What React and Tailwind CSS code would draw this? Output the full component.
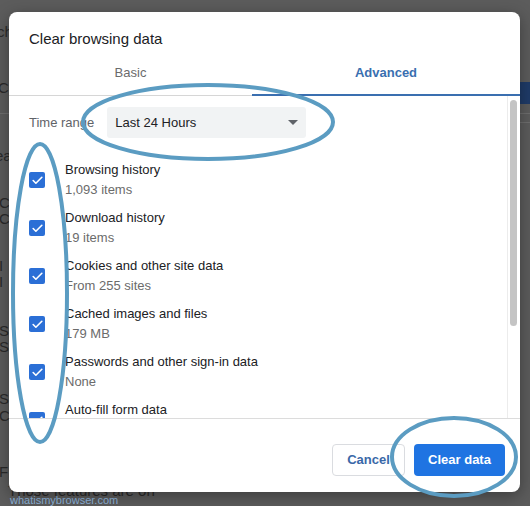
import React from "react";
import { Check } from "lucide-react";

const items = [
  { title: "Browsing history", sub: "1,093 items" },
  { title: "Download history", sub: "19 items" },
  { title: "Cookies and other site data", sub: "From 255 sites" },
  { title: "Cached images and files", sub: "179 MB" },
  { title: "Passwords and other sign-in data", sub: "None" },
  { title: "Auto-fill form data", sub: "" },
];

function Checkbox() {
  return (
    <div className="grid h-[16px] w-[16px] shrink-0 place-items-center rounded-[2px] bg-[#2b6fd6]">
      <Check className="h-[13px] w-[13px] text-white" strokeWidth={3} aria-hidden />
    </div>
  );
}

function PageBehind() {
  // the settings page that peeks out at the edges of the modal
  return (
    <div className="absolute inset-0 text-[15px] leading-[16px] text-[#2a2a2a]">
      <div className="flex flex-col">
        <span className="mt-[24px] -ml-[3px]">ch</span>
        <span className="mt-[40px] -ml-[2px]">C</span>
        <div className="mt-[17px] h-px w-full bg-[#6e6e6e]" />
        <span className="mt-[34px] -ml-[5px]">ea</span>
        <span className="mt-[31px] -ml-[1px]">C</span>
        <span className="-ml-[1px]">C</span>
        <span className="mt-[31px] -ml-[1px]">I</span>
        <span className="-ml-[1px]">I</span>
        <span className="mt-[33px] -ml-[1px]">S</span>
        <span className="-ml-[1px]">S</span>
        <span className="mt-[36px] -ml-[1px]">S</span>
        <span className="mt-[1px] -ml-[1px]">C</span>
        <span className="mt-[40px] -ml-[1px]">F</span>
      </div>
      <span className="absolute left-[8px] top-[483px] whitespace-nowrap">Those features are on</span>
      <div className="absolute right-0 top-[82px] h-[22px] w-[12px] bg-[#1f3b68]" />
      <div className="absolute right-0 top-[122px] h-px w-[12px] bg-[#6e6e6e]" />
      <span className="absolute left-[10px] top-[494px] text-[11px] leading-[12px] text-[#8fb6dc]">whatismybrowser.com</span>
    </div>
  );
}

function Annotations() {
  return (
    <svg className="pointer-events-none absolute inset-0" width="530" height="506" viewBox="0 0 530 506" fill="none">
      <g stroke="#5b9cc2" strokeWidth="4">
        <ellipse cx="208" cy="122" rx="125" ry="37" />
        <ellipse cx="40" cy="293" rx="27" ry="149" />
        <ellipse cx="454" cy="457" rx="62" ry="39" />
      </g>
    </svg>
  );
}

export default function App() {
  return (
    <div className="relative h-[506px] w-[530px] overflow-hidden bg-[#5c5c5c] font-['Liberation_Sans',Arial,sans-serif]">
      <PageBehind />

      <div className="absolute left-[9px] top-[12px] flex h-[480px] w-[511px] flex-col overflow-hidden rounded-[8px] bg-white shadow-[0_4px_16px_rgba(0,0,0,0.35)]">
        <div className="h-[45px] pl-[20px] pt-[17px] text-[15px] leading-[20px] text-[#202124]">Clear browsing data</div>

        <div className="flex h-[39px] border-b border-[#d6d6d6]">
          <div className="flex w-[243px] justify-center pt-[8px] text-[13px] leading-[16px] text-[#6b6b6b]">Basic</div>
          <div className="-mb-px flex flex-1 justify-center border-b-2 border-[#3a6fb0] pt-[8px] text-[13px] font-bold leading-[16px] text-[#3a6fb0]">
            Advanced
          </div>
        </div>

        <div className="flex min-h-0 flex-1">
          <div className="min-w-0 flex-1 overflow-hidden pl-[20px]">
            <div className="flex items-center gap-[13px] pt-[11px] pb-[18px]">
              <span className="text-[13px] text-[#5f6368]">Time range</span>
              <div className="flex h-[31px] w-[199px] items-center justify-between rounded-[3px] bg-[#f1f3f4] pl-[8px] pr-[8px]">
                <span className="text-[13px] text-[#202124]">Last 24 Hours</span>
                <svg width="10" height="5" viewBox="0 0 10 5" aria-hidden>
                  <path d="M0 0h10L5 5z" fill="#5f6368" />
                </svg>
              </div>
            </div>

            {items.map((it) => (
              <div key={it.title} className="flex h-[48px] items-center gap-[20px]">
                <Checkbox />
                <div className="flex flex-col text-[13px] leading-[20px]">
                  <span className="text-[#202124]">{it.title}</span>
                  <span className="h-[20px] text-[#6b6b6b]">{it.sub}</span>
                </div>
              </div>
            ))}
          </div>
          <div className="w-[13px] shrink-0 border-l border-[#ececec] pl-[2px] pt-[4px]">
            <div className="h-[226px] w-[7px] rounded-full bg-[#c4c4c4]" />
          </div>
        </div>

        <div className="flex h-[74px] shrink-0 justify-end gap-[9px] border-t border-[#dcdcdc] pr-[15px] pt-[25px]">
          <button type="button" className="h-[32px] w-[73px] rounded-[4px] border border-[#dadce0] bg-white text-[13px] font-bold text-[#3a68a8]">
            Cancel
          </button>
          <button type="button" className="h-[32px] w-[91px] rounded-[4px] bg-[#1f74e2] text-[13px] font-bold text-white">
            Clear data
          </button>
        </div>
      </div>

      <Annotations />
    </div>
  );
}
